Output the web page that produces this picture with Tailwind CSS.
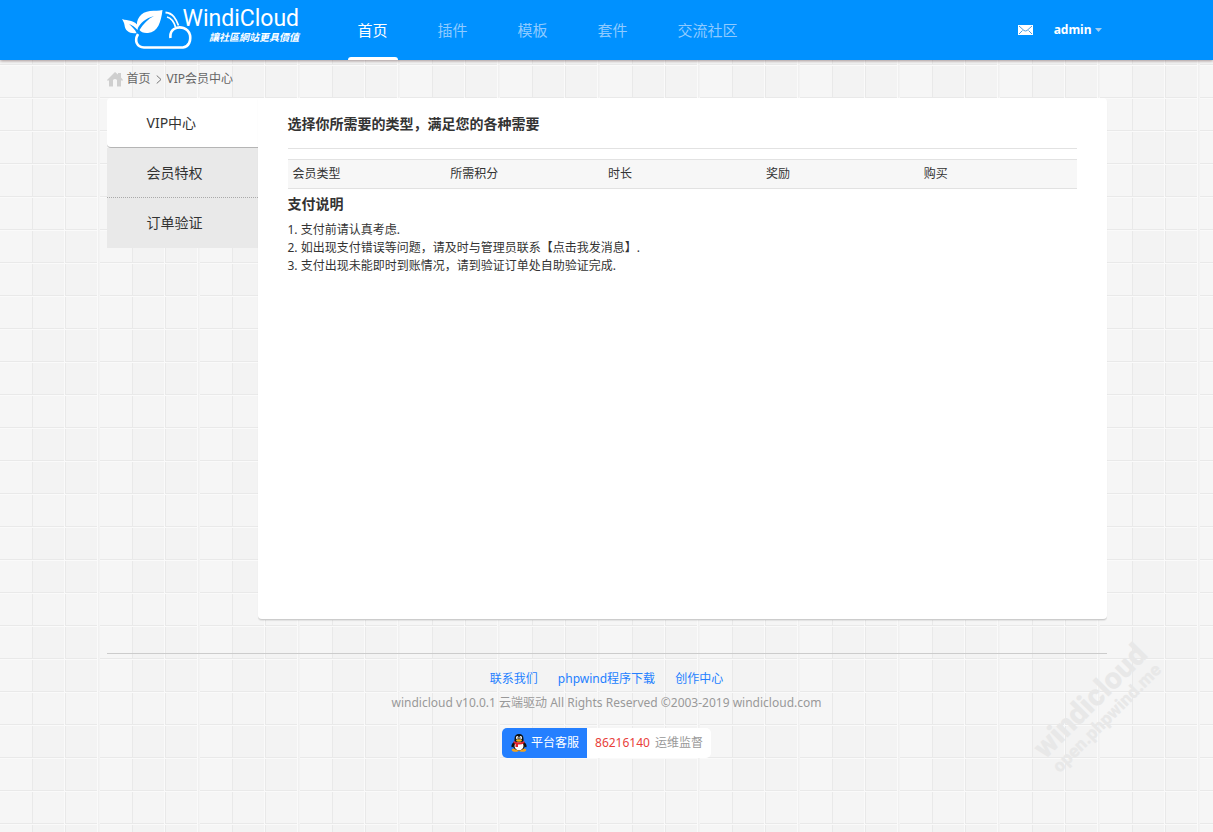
<!DOCTYPE html>
<html lang="zh-CN">
<head>
<meta charset="utf-8">
<meta name="viewport" content="width=device-width, initial-scale=1">
<title>VIP会员中心</title>
<script src="https://cdn.jsdelivr.net/npm/@tailwindcss/browser@4"></script>
</head>
<body class="relative min-h-screen overflow-x-hidden bg-[#f4f4f4] font-['Noto_Sans','Noto_Sans_CJK_SC',sans-serif] text-xs text-[#333]">

<!-- Tiled grid backdrop -->
<svg class="absolute inset-0 -z-10 h-full w-full" aria-hidden="true">
  <defs>
    <pattern id="grid" width="100" height="99" y="-2" patternUnits="userSpaceOnUse">
      <rect width="100" height="99" fill="#f5f5f5"/>
      <rect y="33" x="33" width="67" height="66" fill="#f3f3f3"/>
      <rect width="32" height="99" fill="#f6f6f6"/>
      <g fill="#e9e9e9">
        <rect y="0" width="97" height="1"/><rect y="33" width="97" height="1"/><rect y="66" width="97" height="1"/>
        <rect x="32" width="1" height="99"/><rect x="65" width="1" height="99"/>
      </g>
      <rect x="98" width="1" height="99" fill="#f0f0f0"/>
      <g fill="#fafafa">
        <rect y="1" width="97" height="1"/><rect y="34" width="97" height="1"/><rect y="67" width="97" height="1"/>
        <rect x="64" width="1" height="99"/><rect x="97" width="1" height="99"/>
      </g>
    </pattern>
  </defs>
  <rect width="100%" height="100%" fill="url(#grid)"/>
</svg>

<header class="bg-[#0091ff] shadow-[0_1px_3px_rgba(40,0,0,0.4)]">
  <div class="mx-auto flex h-[60px] max-w-[1000px] items-stretch">
    <a href="#" class="flex w-[241px] pl-[15px] text-white" aria-label="WindiCloud">
      <svg class="mt-2 h-[42px] w-[70px] shrink-0" viewBox="12 8 70 42" aria-hidden="true">
        <path d="M52.500 10C51 22 48 32 38 33C34 33.500 31 32 29.500 30C33 24 38 19 44 16C36 18 30 23 27.500 29C25 19 31 12 40 11C45 10.500 49 11 52.500 10Z" fill="#fff"/>
        <path d="M12 19C18 21 25 20 28 26L27.500 30C25 27 22 25 19 24C22 27 25 29 26.500 33C20 34 15 31 14.500 25C14 22 13 21 12 19Z" fill="#fff"/>
        <path d="M28 34C24 41 27 47 34 47.500H73C79 46.500 81 41 80 35C78 28 70 25.500 64 29C61 31 60 34 60.500 38" fill="none" stroke="#fff" stroke-width="2.600"/>
        <path d="M55.500 12.500C63 13 66 19 68.500 25.500M57 17C61 18 64 22 65.500 27" fill="none" stroke="#fff" stroke-width="1.800"/>
      </svg>
      <span class="-ml-[9px] flex flex-col items-end pt-[5px]">
        <span class="font-['Roboto'] text-[23px] leading-[27px]">WindiCloud</span>
        <span class="font-['Noto_Sans_CJK_TC',sans-serif] text-[10px] leading-[10px] font-bold whitespace-nowrap italic">讓社區網站更具價值</span>
      </span>
    </a>
    <nav class="flex flex-1 gap-[30px] text-[15px]">
      <a href="#" class="relative flex items-center px-[10px] text-white">首页<span class="absolute inset-x-0 bottom-0 h-[3px] rounded-t-sm bg-white"></span></a>
      <a href="#" class="flex items-center px-[10px] text-[#8fcaff]">插件</a>
      <a href="#" class="flex items-center px-[10px] text-[#8fcaff]">模板</a>
      <a href="#" class="flex items-center px-[10px] text-[#8fcaff]">套件</a>
      <a href="#" class="flex items-center px-[10px] text-[#8fcaff]">交流社区</a>
    </nav>
    <div class="flex items-center gap-[21px] pr-[5px] pb-px text-white">
      <a href="#" aria-label="消息">
        <svg class="h-[10px] w-[15px]" viewBox="0 0 15 10"><rect width="15" height="10" fill="#fff"/><path d="M1 1L6 5.500Q7.500 6.500 9 5.500L14 1M1 9L4.500 5.500M14 9L10.500 5.500" fill="none" stroke="#4f9fe0" stroke-width="1"/></svg>
      </a>
      <button type="button" class="flex items-center gap-[3px] font-bold">admin<svg class="h-1 w-[7px]" viewBox="0 0 7 4" aria-hidden="true"><path d="M0 0H7L3.500 4Z" fill="#a3cdf0"/></svg></button>
    </div>
  </div>
</header>

<div class="mx-auto max-w-[1000px]">
  <nav class="flex h-[38px] items-center text-[#666]" aria-label="位置">
    <svg class="mr-1 h-[15px] w-4" viewBox="0 0 16 15" aria-hidden="true"><path d="M8 0L11 2.500V1H14V5.500L16 8V8.500H14V14.500H10V8Q8 6 6 8V14.500H2V8.500H0V8Z" fill="#cfcfcf"/></svg>
    <a href="#">首页</a>
    <svg class="mx-[5px] h-[9px] w-[6px]" viewBox="0 0 6 9" aria-hidden="true"><path d="M.7.500L5 4.500L.7 8.500" fill="none" stroke="#777"/></svg>
    <a href="#">VIP会员中心</a>
  </nav>

  <div class="flex items-start">
    <aside class="w-[151px] shrink-0 text-sm">
      <a href="#" class="flex h-[50px] items-center rounded-l border-b border-[#b5b5b5] bg-white pl-10">VIP中心</a>
      <a href="#" class="flex h-[50px] items-center border-b border-dotted border-[#aaa] bg-[#e9e9e9] pl-10">会员特权</a>
      <a href="#" class="flex h-[50px] items-center bg-[#e9e9e9] pl-10">订单验证</a>
    </aside>
    <main class="min-h-[522px] min-w-0 flex-1 rounded-r rounded-bl border-b border-[#ccc] bg-white px-[30px] shadow-[0_1px_1px_rgba(0,0,0,0.08)]">
      <h1 class="mb-[10px] flex h-[51px] items-center border-b border-[#e2e2e2] pt-0.5 text-sm font-bold">选择你所需要的类型，满足您的各种需要</h1>
      <table class="w-full table-fixed border-y border-[#e2e2e2] bg-[#f7f7f7] text-left leading-7">
        <thead>
          <tr>
            <th scope="col" class="pl-[5px] font-normal">会员类型</th>
            <th scope="col" class="pl-[5px] font-normal">所需积分</th>
            <th scope="col" class="pl-[5px] font-normal">时长</th>
            <th scope="col" class="pl-[5px] font-normal">奖励</th>
            <th scope="col" class="pl-[5px] font-normal">购买</th>
          </tr>
        </thead>
      </table>
      <h2 class="mb-[7px] pt-[5px] text-sm font-bold">支付说明</h2>
      <div class="leading-[18px]">
        <p>1. 支付前请认真考虑.</p>
        <p>2. 如出现支付错误等问题，请及时与管理员联系【<a href="#">点击我发消息</a>】.</p>
        <p>3. 支付出现未能即时到账情况，请到验证订单处自助验证完成.</p>
      </div>
    </main>
  </div>

  <footer class="mt-[33px] flex flex-col items-center border-t border-[#ccc] pt-[13px] text-[#999]">
    <div class="flex gap-5 leading-6 text-[#247fff]">
      <a href="#">联系我们</a>
      <a href="#">phpwind程序下载</a>
      <a href="#">创作中心</a>
    </div>
    <p class="mb-[14px] leading-[23px]">windicloud v10.0.1 云端驱动 All Rights Reserved ©2003-2019 windicloud.com</p>
    <a href="#" class="flex h-[30px] overflow-hidden rounded-[5px] bg-white">
      <span class="flex items-center gap-1 bg-[#247fff] pr-2 pl-[9px] text-white">
        <svg class="h-[18px] w-4" viewBox="0 0 16 18" aria-hidden="true">
          <ellipse cx="4.500" cy="16" rx="3.700" ry="1.800" fill="#f5a21b"/><ellipse cx="11.500" cy="16" rx="3.700" ry="1.800" fill="#f5a21b"/>
          <path d="M3 8Q0 10 .5 13Q1 14 3 12M13 8Q16 10 15.500 13Q15 14 13 12" fill="#111"/>
          <ellipse cx="8" cy="11.500" rx="6" ry="5" fill="#111"/>
          <ellipse cx="8" cy="12" rx="4.500" ry="4.200" fill="#fff"/>
          <path d="M3.500 7V5Q3.500 0 8 0T12.500 5V7Q8 10 3.500 7Z" fill="#111"/>
          <ellipse cx="6.300" cy="3.800" rx="1.300" ry="1.700" fill="#fff"/><ellipse cx="9.700" cy="3.800" rx="1.300" ry="1.700" fill="#fff"/>
          <circle cx="6.700" cy="4" r=".6"/><circle cx="9.300" cy="4" r=".6"/>
          <ellipse cx="8" cy="6.500" rx="3" ry="1.200" fill="#f9b51c"/>
          <path d="M2.800 7Q8 10 13.200 7L13.500 9Q10 11 7 10.500V13H4.500V10L2.500 9Z" fill="#e3212b"/>
        </svg>
        平台客服
      </span>
      <span class="flex items-center gap-[5px] px-2"><span class="text-[#e8403a]">86216140</span>运维监督</span>
    </a>
  </footer>
</div>

<!-- Diagonal watermark -->
<div class="absolute top-[684px] right-[26px] flex w-[180px] -rotate-45 flex-col items-center font-['Roboto',sans-serif] font-black whitespace-nowrap text-[#e8e8e8] select-none">
  <span class="text-[30px] leading-7">windicloud</span>
  <span class="text-lg leading-5">open.phpwind.me</span>
</div>
</body>
</html>
